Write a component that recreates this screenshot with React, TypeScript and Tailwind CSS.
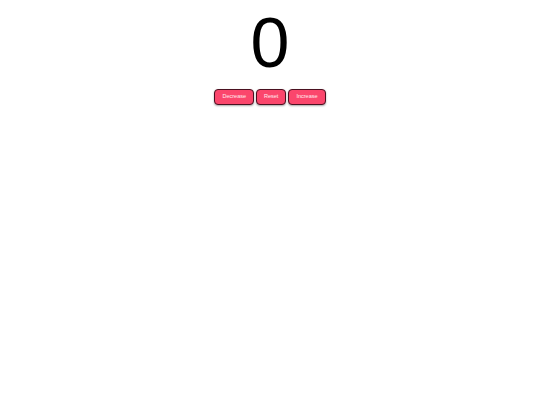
import React, { useState } from 'react';

const App: React.FC = () => {
  const [count, setCount] = useState(0);

  const btn =
    'h-[16px] px-[7px] rounded-[4px] bg-[#fb466c] border border-[#4a1020] text-white/90 text-[5.5px] leading-none shadow-[0_1px_2px_rgba(0,0,0,0.35)]';

  return (
    <div className="w-[540px] h-[405px] bg-white flex flex-col items-center font-['Liberation_Sans',Arial,sans-serif]">
      <div className="mt-[8px] text-[70px] leading-[70px] text-black">{count}</div>
      <div className="mt-[11px] flex gap-[2px]">
        <button className={btn} onClick={() => setCount(c => c - 1)}>Decrease</button>
        <button className={btn} onClick={() => setCount(0)}>Reset</button>
        <button className={btn} onClick={() => setCount(c => c + 1)}>Increase</button>
      </div>
    </div>
  );
};

export default App;
